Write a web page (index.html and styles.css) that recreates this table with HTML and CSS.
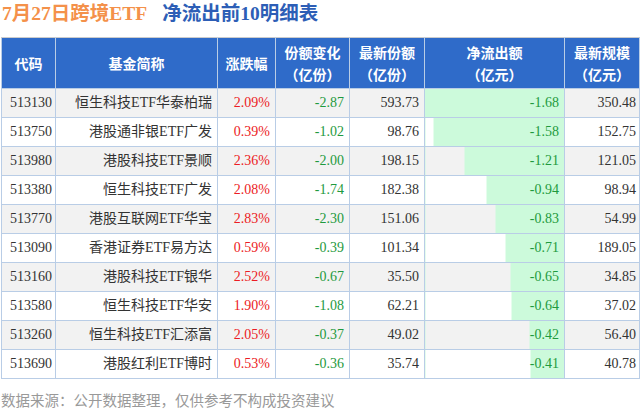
FILE: index.html
```html
<!DOCTYPE html>
<html lang="zh-CN">
<head>
<meta charset="utf-8">
<title>7月27日跨境ETF 净流出前10明细表</title>
<link rel="stylesheet" href="styles.css">
</head>
<body>
<div class="page">
  <h1 class="title"><span class="t-date">7月27日跨境ETF</span><span class="t-main">净流出前10明细表</span></h1>
  <table class="grid">
    <colgroup>
      <col class="c-code"><col class="c-name"><col class="c-pct"><col class="c-chg"><col class="c-share"><col class="c-flow"><col class="c-scale">
    </colgroup>
    <thead>
      <tr>
        <th>代码</th>
        <th>基金简称</th>
        <th>涨跌幅</th>
        <th>份额变化<br>（亿份）</th>
        <th>最新份额<br>（亿份）</th>
        <th>净流出额<br>（亿元）</th>
        <th>最新规模<br>（亿元）</th>
      </tr>
    </thead>
    <tbody>
      <tr><td class="code">513130</td><td class="name">恒生科技ETF华泰柏瑞</td><td class="up">2.09%</td><td class="down">-2.87</td><td>593.73</td><td class="flow" style="--w:100%">-1.68</td><td class="last">350.48</td></tr>
      <tr><td class="code">513750</td><td class="name">港股通非银ETF广发</td><td class="up">0.39%</td><td class="down">-1.02</td><td>98.76</td><td class="flow" style="--w:94.05%">-1.58</td><td class="last">152.75</td></tr>
      <tr><td class="code">513980</td><td class="name">港股科技ETF景顺</td><td class="up">2.36%</td><td class="down">-2.00</td><td>198.15</td><td class="flow" style="--w:72.02%">-1.21</td><td class="last">121.05</td></tr>
      <tr><td class="code">513380</td><td class="name">恒生科技ETF广发</td><td class="up">2.08%</td><td class="down">-1.74</td><td>182.38</td><td class="flow" style="--w:55.95%">-0.94</td><td class="last">98.94</td></tr>
      <tr><td class="code">513770</td><td class="name">港股互联网ETF华宝</td><td class="up">2.83%</td><td class="down">-2.30</td><td>151.06</td><td class="flow" style="--w:49.40%">-0.83</td><td class="last">54.99</td></tr>
      <tr><td class="code">513090</td><td class="name">香港证券ETF易方达</td><td class="up">0.59%</td><td class="down">-0.39</td><td>101.34</td><td class="flow" style="--w:42.26%">-0.71</td><td class="last">189.05</td></tr>
      <tr><td class="code">513160</td><td class="name">港股科技ETF银华</td><td class="up">2.52%</td><td class="down">-0.67</td><td>35.50</td><td class="flow" style="--w:38.69%">-0.65</td><td class="last">34.85</td></tr>
      <tr><td class="code">513580</td><td class="name">恒生科技ETF华安</td><td class="up">1.90%</td><td class="down">-1.08</td><td>62.21</td><td class="flow" style="--w:38.10%">-0.64</td><td class="last">37.02</td></tr>
      <tr><td class="code">513260</td><td class="name">恒生科技ETF汇添富</td><td class="up">2.05%</td><td class="down">-0.37</td><td>49.02</td><td class="flow" style="--w:25.00%">-0.42</td><td class="last">56.40</td></tr>
      <tr><td class="code">513690</td><td class="name">港股红利ETF博时</td><td class="up">0.53%</td><td class="down">-0.36</td><td>35.74</td><td class="flow" style="--w:24.40%">-0.41</td><td class="last">40.78</td></tr>
    </tbody>
  </table>
  <p class="source">数据来源：公开数据整理，仅供参考不构成投资建议</p>
</div>
</body>
</html>
```
FILE: styles.css
```css
html, body {
  margin: 0;
  padding: 0;
  background: #ffffff;
}

.page {
  width: 640px;
  height: 410px;
  overflow: hidden;
  padding: 0 0 0 1px;
  box-sizing: border-box;
  font-family: "Liberation Serif", "Noto Sans CJK SC", serif;
}

.title {
  margin: 0 0 10px 1px;
  height: 27px;
  line-height: 27px;
  font-size: 19.5px;
  font-weight: bold;
  white-space: nowrap;
  display: flex;
  gap: 15px;
}

.t-date {
  color: #f4914a;
}

.t-main {
  color: #2d5eb6;
}

.grid {
  border-collapse: collapse;
  table-layout: fixed;
  width: 638px;
  font-size: 14px;
  color: #333333;
}

.c-code { width: 54px; }
.c-name { width: 162px; }
.c-pct { width: 58px; }
.c-chg { width: 74px; }
.c-share { width: 75px; }
.c-flow { width: 140px; }
.c-scale { width: 75px; }

.grid thead tr {
  border-top: 1px solid #cccccc;
}

.grid th {
  background: #2f6bc9;
  color: #ffffff;
  font-family: "Noto Sans CJK SC", "Liberation Sans", sans-serif;
  font-weight: bold;
  font-size: 14px;
  line-height: 22px;
  height: 50px;
  padding: 0;
  text-align: center;
  border: 1px solid #b9cde6;
  border-top-color: #cccccc;
}

.grid td {
  height: 28px;
  line-height: 28px;
  padding: 0 5px 0 0;
  text-align: right;
  border: 1px solid #b9cde6;
  white-space: nowrap;
  overflow: hidden;
}

.grid tbody tr:nth-child(odd) {
  background: #f2f2f2;
}

.grid tbody tr:nth-child(even) {
  background: #ffffff;
}

.grid td.code {
  padding-right: 3px;
}

.grid td.last {
  padding-right: 3px;
}

.grid td.up {
  color: #ec1c24;
}

.grid td.down {
  color: #1f9a3e;
}

.grid td.flow {
  color: #1f9a3e;
  background: linear-gradient(to left, #ccfadb var(--w), transparent var(--w));
}

.source {
  margin: 11px 0 0 0;
  font-family: "Noto Sans CJK SC", "Liberation Sans", sans-serif;
  font-size: 14.5px;
  line-height: 20px;
  color: #999999;
  white-space: nowrap;
}
```
